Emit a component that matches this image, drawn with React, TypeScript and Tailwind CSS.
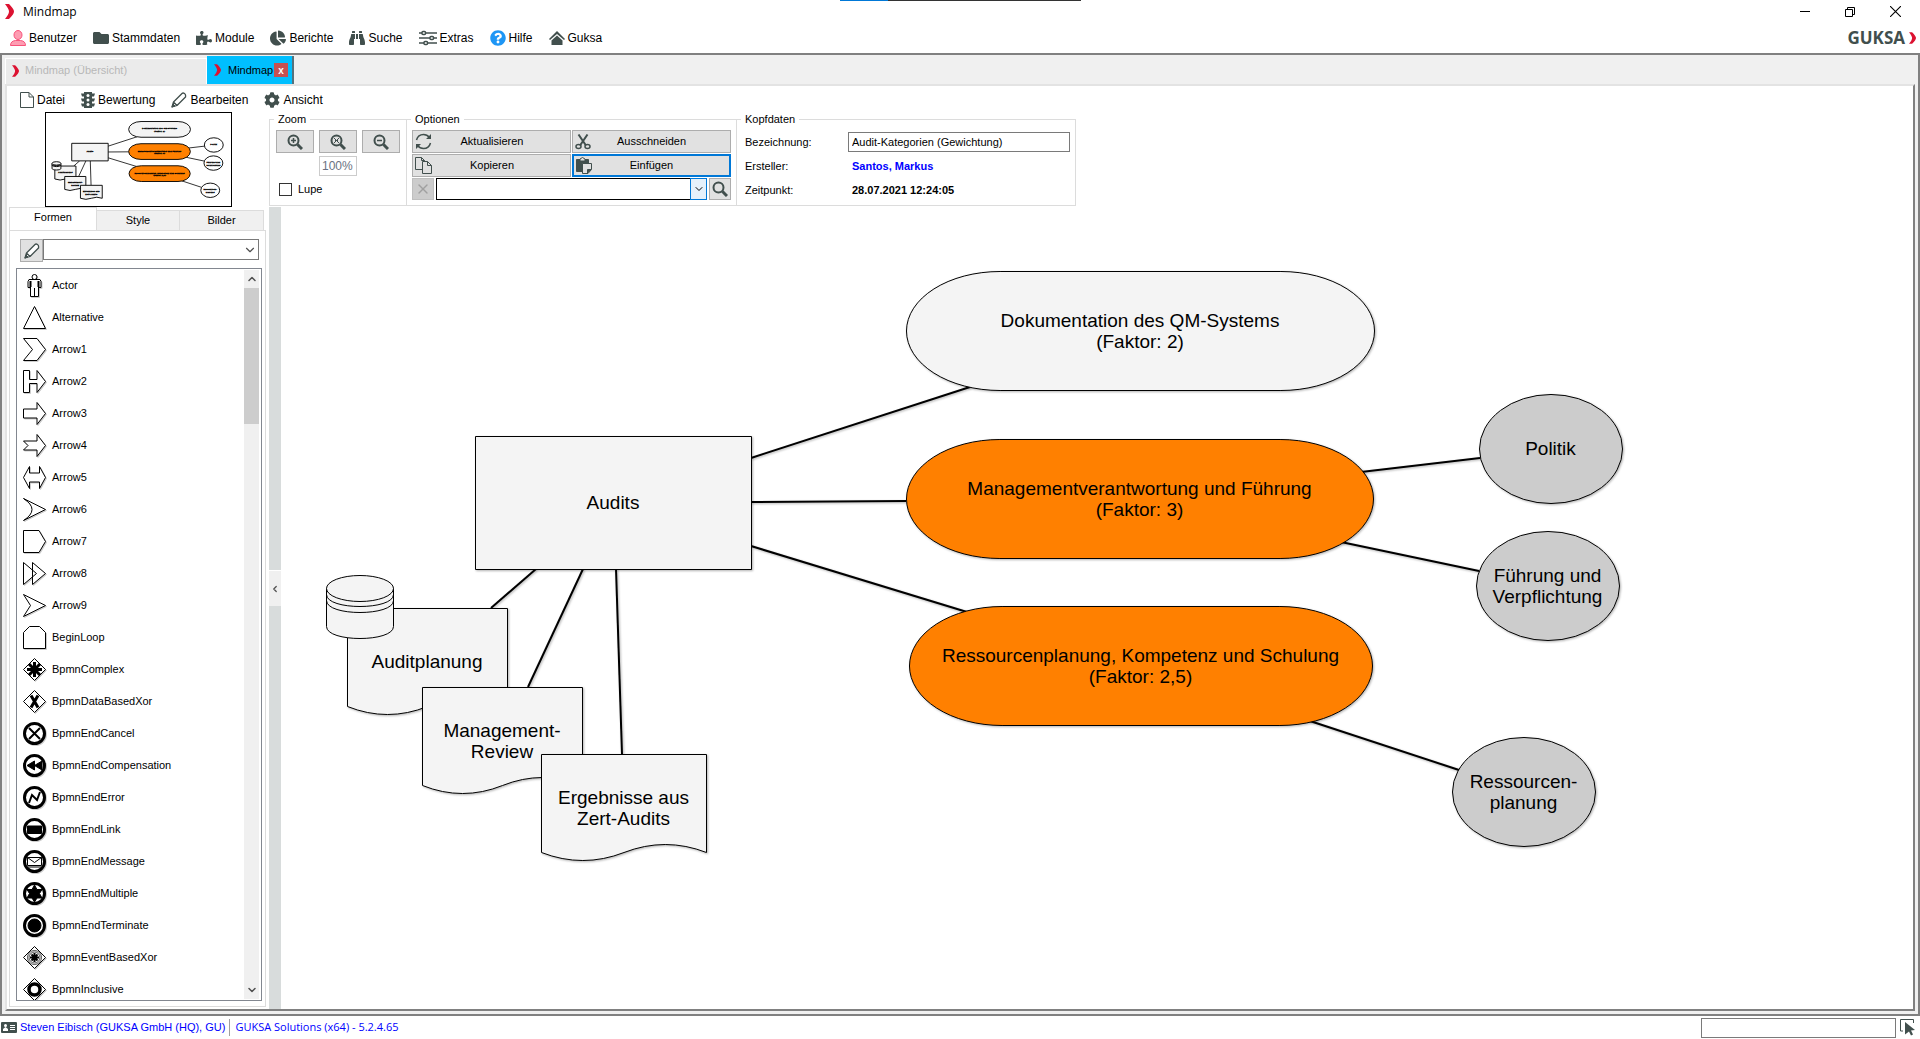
import type { ReactNode } from 'react';
import {
  FaBinoculars,
  FaChartPie,
  FaCog,
  FaFolder,
  FaPuzzlePiece,
  FaQuestionCircle,
} from 'react-icons/fa';
import { ChevronDown, ChevronUp, ChevronLeft, X } from 'lucide-react';

const DARK = '#414f4d';

function Chevron({ className = 'w-[9px] h-[15px]' }: { className?: string }) {
  return (
    <svg viewBox="0 0 9 15" className={className} aria-hidden="true">
      <path d="M0 0h4q5 5 5 7.500t-5 7.500h-4q4-5 4-7.500t-4-7.500z" fill="#dc1231" />
    </svg>
  );
}

function UserIcon() {
  return (
    <svg viewBox="0 0 16 16" className="w-4 h-4" fill="#fd9db2" stroke="#f8537b">
      <ellipse cx="8" cy="5" rx="4" ry="4.500" />
      <path d="M.5 15.500q0-4.500 5-5h5q5 .5 5 5z" />
    </svg>
  );
}

function HouseIcon() {
  return (
    <svg viewBox="0 0 16 16" className="w-4 h-4" fill={DARK}>
      <path d="M8 1L0 9l1 1 7-6 7 6 1-1z" />
      <path d="M8 5.500L2.500 10.500V15h11v-4.500z" />
    </svg>
  );
}

function SlidersIcon() {
  return (
    <svg viewBox="0 0 18 16" className="w-[18px] h-4" fill="#fff" stroke={DARK} strokeWidth="1.500">
      <path d="M0 3h18M0 8h18M0 13h18" />
      <rect x="3" y="1.500" width="3.500" height="3" rx="1" />
      <rect x="11" y="6.500" width="3.500" height="3" rx="1" />
      <rect x="5" y="11.500" width="3.500" height="3" rx="1" />
    </svg>
  );
}

function PageIcon() {
  return (
    <svg viewBox="0 0 14 16" className="w-[14px] h-4" fill="#fff" stroke={DARK}>
      <path d="M.5.500h8.500l4.500 4.500v10.500H.5zM9 .5V5h4.500" />
    </svg>
  );
}

function TrafficIcon() {
  return (
    <svg viewBox="0 0 14 16" className="w-[14px] h-4">
      <path d="M3 0h8v1.500h3l-1 3h-2v2h3l-1 3h-2v2h3l-1 3h-2V16H3v-1.500H1l-1-3h3v-2H1l-1-3h3v-2H1l-1-3h3z" fill={DARK} />
      <circle cx="7" cy="3.500" r="1.500" fill="#fff" />
      <circle cx="7" cy="8" r="1.500" fill="#fff" />
      <circle cx="7" cy="12.500" r="1.500" fill="#fff" />
    </svg>
  );
}

function PencilIcon() {
  return (
    <svg viewBox="0 0 16 16" className="w-4 h-4" fill="#fff" stroke={DARK} strokeLinejoin="round">
      <path d="M1 15l1.500-5L11 1.500Q12 .5 13.500 1.500T14.500 5L6 13.500zM2.500 10l3.500 3.500" strokeWidth="1.300" />
      <path d="M1 15l1-3 2 2z" fill={DARK} />
    </svg>
  );
}

function Magnifier({ kind }: { kind: 'plus' | 'minus' | 'cross' | 'plain' }) {
  return (
    <svg viewBox="0 0 16 16" className="w-4 h-4" fill="none" stroke={DARK}>
      <circle cx="6.500" cy="6.500" r="5" strokeWidth="2" />
      <path d="M10.500 10.500l4.500 4.500" strokeWidth="3" />
      {kind === 'plus' && <path d="M4 6.500h5M6.500 4v5" strokeWidth="1.500" />}
      {kind === 'minus' && <path d="M4 6.500h5" strokeWidth="1.500" />}
      {kind === 'cross' && <path d="M4 4l5 5M9 4l-5 5M5 6.500h3" />}
    </svg>
  );
}

function RefreshIcon() {
  return (
    <svg viewBox="0 0 17 17" className="w-[17px] h-[17px]" fill="none" stroke={DARK} strokeWidth="1.500">
      <path d="M1.500 7Q3 1.500 8.500 1.500q3.500 0 6 3M15.500 10Q14 15.500 8.500 15.500q-3.500 0-6-3" />
      <path d="M16 1v5h-5zM1 16v-5h5z" fill={DARK} stroke="none" />
    </svg>
  );
}

function ScissorsIcon() {
  return (
    <svg viewBox="0 0 16 16" className="w-4 h-4" fill="none" stroke={DARK} strokeWidth="1.500">
      <path d="M3.500.500l7.500 11M12.500.500L5 11.500" strokeWidth="2" />
      <ellipse cx="3.500" cy="12.500" rx="2.500" ry="2" />
      <ellipse cx="12.500" cy="12.500" rx="2.500" ry="2" />
    </svg>
  );
}

function CopyIcon() {
  return (
    <svg viewBox="0 0 17 17" className="w-[17px] h-[17px]" fill="#e1e1e1" stroke={DARK}>
      <path d="M.5.500h6l3 3v9h-9zM6.500.500v3h3" />
      <path d="M7.500 4.500h5l4 4v8h-9zM12.500 4.500v4h4" />
    </svg>
  );
}

function PasteIcon() {
  return (
    <svg viewBox="0 0 16 17" className="w-4 h-[17px]" stroke={DARK}>
      <path d="M.5 2.500h12v12H.5z" fill={DARK} />
      <path d="M4 4V2Q6.500-1 9 2v2z" fill="#e1e1e1" />
      <path d="M6.500 6.500h9v6l-3.500 4H6.500z" fill="#e1e1e1" />
      <path d="M15 12.500h-3.500V16z" fill={DARK} />
    </svg>
  );
}

const MAIN_MENU: { label: string; icon: ReactNode }[] = [
  { label: 'Benutzer', icon: <UserIcon /> },
  { label: 'Stammdaten', icon: <FaFolder className="w-4 h-4 text-[#414f4d]" /> },
  { label: 'Module', icon: <FaPuzzlePiece className="w-4 h-4 text-[#414f4d]" /> },
  { label: 'Berichte', icon: <FaChartPie className="w-4 h-4 text-[#414f4d]" /> },
  { label: 'Suche', icon: <FaBinoculars className="w-4 h-4 text-[#414f4d]" /> },
  { label: 'Extras', icon: <SlidersIcon /> },
  { label: 'Hilfe', icon: <FaQuestionCircle className="w-4 h-4 text-[#1e96f5]" /> },
  { label: 'Guksa', icon: <HouseIcon /> },
];

const MAP_MENU: { label: string; icon: ReactNode }[] = [
  { label: 'Datei', icon: <PageIcon /> },
  { label: 'Bewertung', icon: <TrafficIcon /> },
  { label: 'Bearbeiten', icon: <PencilIcon /> },
  { label: 'Ansicht', icon: <FaCog className="w-4 h-4 text-[#414f4d]" /> },
];

const diamond = <path d="M11.500.500l11 11-11 11-11-11z" />;
const ring = <circle cx="11.500" cy="11.500" r="10" strokeWidth="3" />;
const star = 'M11.500 4v15M4 11.500h15M6 6l11 11M17 6L6 17';

const SHAPES: { name: string; drawing: ReactNode }[] = [
  {
    name: 'Actor',
    drawing: (
      <>
        <circle cx="11.500" cy="3" r="2.500" />
        <path d="M6 5.500h11l1 2v6h-2.500V9v13.500h-8V9v4.500H5v-6zM11.500 14v8" />
        <path d="M7.500 7v6M15.500 7v6" strokeWidth="2" />
      </>
    ),
  },
  { name: 'Alternative', drawing: <path d="M11.500.500l11 22H.5z" /> },
  { name: 'Arrow1', drawing: <path d="M.5.500H14l8.500 11-8.500 11H.5l9-11z" /> },
  { name: 'Arrow2', drawing: <path d="M.5.500h6v9H14v-9l8.500 11-8.500 11v-9H6.500v9h-6z" /> },
  { name: 'Arrow3', drawing: <path d="M.5 7H14V.5l8.500 11-8.500 11V16H.5z" /> },
  { name: 'Arrow4', drawing: <path d="M.5 7H14V.5l8.500 11-8.500 11V16H.5L5 11.500z" /> },
  { name: 'Arrow5', drawing: <path d="M.5 11.500L6.500.500V7h10V.5l6 11-6 11V16h-10v6.500z" /> },
  { name: 'Arrow6', drawing: <path d="M.5.500l22 11-22 11q17-11 0-22z" /> },
  { name: 'Arrow7', drawing: <path d="M.5.500H16l6.500 11-6.500 11H.5z" /> },
  { name: 'Arrow8', drawing: <path d="M.5.500l13 11-13 11zM9.500.500l13 11-13 11z" /> },
  { name: 'Arrow9', drawing: <path d="M.5.500l22 11-22 11 7-11z" /> },
  { name: 'BeginLoop', drawing: <path d="M.5 22.500v-16l6-6h10l6 6v16z" /> },
  { name: 'BpmnComplex', drawing: <>{diamond}<path d={star} strokeWidth="3" /></> },
  {
    name: 'BpmnDataBasedXor',
    drawing: (
      <>
        {diamond}
        <path d="M8 5.500l7 12M15 5.500l-7 12" strokeWidth="3" />
      </>
    ),
  },
  { name: 'BpmnEndCancel', drawing: <>{ring}<path d="M6 6l11 11M17 6L6 17" strokeWidth="2" /></> },
  { name: 'BpmnEndCompensation', drawing: <>{ring}<path d="M11.500 7v9L4 11.500zM19 7v9l-7.500-4.500z" fill="#000" /></> },
  { name: 'BpmnEndError', drawing: <>{ring}<path d="M6 17l3-8 5 5 3-8" strokeWidth="2" /></> },
  { name: 'BpmnEndLink', drawing: <>{ring}<path d="M4.500 8h14v7.500h-14z" fill="#000" /></> },
  {
    name: 'BpmnEndMessage',
    drawing: (
      <>
        {ring}
        <path d="M4.500 7.500h14v8h-14zM4.500 7.500l7 5 7-5M5 17h13" />
      </>
    ),
  },
  { name: 'BpmnEndMultiple', drawing: <>{ring}<path d="M11.500 3l2.500 4.500h5l-2.500 4 2.500 4.500h-5l-2.500 4-2.500-4H4l2.500-4.500-2.500-4h5z" fill="#000" /></> },
  { name: 'BpmnEndTerminate', drawing: <>{ring}<circle cx="11.500" cy="11.500" r="6.500" fill="#000" /></> },
  {
    name: 'BpmnEventBasedXor',
    drawing: (
      <>
        {diamond}
        <circle cx="11.500" cy="11.500" r="7" strokeWidth=".7" />
        <circle cx="11.500" cy="11.500" r="5.500" strokeWidth=".7" />
        <path d="M11.500 7v9M7 11.500h9M8.500 8.500l6 6M14.500 8.500l-6 6" strokeWidth="2" />
      </>
    ),
  },
  { name: 'BpmnInclusive', drawing: <>{diamond}<circle cx="11.500" cy="11.500" r="5.500" strokeWidth="3.500" /></> },
];

type Kind = 'box' | 'pill' | 'oval' | 'doc';

interface MapNode {
  kind: Kind;
  x: number;
  y: number;
  w: number;
  h: number;
  fill: string;
  lines: string[];
}

// canvas coordinates, origin is the top left of the drawing area
const NODES: MapNode[] = [
  { kind: 'box', x: 194, y: 229, w: 276, h: 133, fill: '#f4f4f4', lines: ['Audits'] },
  { kind: 'doc', x: 66, y: 401, w: 160, h: 107, fill: '#f4f4f4', lines: ['Auditplanung'] },
  { kind: 'doc', x: 141, y: 480, w: 160, h: 107, fill: '#f4f4f4', lines: ['Management-', 'Review'] },
  { kind: 'doc', x: 260, y: 547, w: 165, h: 107, fill: '#f4f4f4', lines: ['Ergebnisse aus', 'Zert-Audits'] },
  { kind: 'pill', x: 625, y: 64, w: 468, h: 119, fill: '#f4f4f4', lines: ['Dokumentation des QM-Systems', '(Faktor: 2)'] },
  { kind: 'pill', x: 625, y: 232, w: 467, h: 119, fill: '#ff8000', lines: ['Managementverantwortung und Führung', '(Faktor: 3)'] },
  { kind: 'pill', x: 628, y: 399, w: 463, h: 119, fill: '#ff8000', lines: ['Ressourcenplanung, Kompetenz und Schulung', '(Faktor: 2,5)'] },
  { kind: 'oval', x: 1198, y: 187, w: 143, h: 109, fill: '#cccccc', lines: ['Politik'] },
  { kind: 'oval', x: 1195, y: 324, w: 143, h: 109, fill: '#cccccc', lines: ['Führung und', 'Verpflichtung'] },
  { kind: 'oval', x: 1171, y: 530, w: 143, h: 109, fill: '#cccccc', lines: ['Ressourcen-', 'planung'] },
];

const EDGES = [
  'M470 251L689 180',
  'M470 295L625 294',
  'M470 339L686 405',
  'M255 362L210 401',
  'M302 362L247 480',
  'M335 362L341 547',
  'M1080 265L1199 251',
  'M1060 335L1198 364',
  'M1029 514L1178 563',
];

function outline({ kind, x, y, w, h }: MapNode) {
  const r = x + w;
  const b = y + h;
  if (kind === 'pill') {
    const q = w / 5;
    return `M${x + q} ${y}H${r - q}A${q} ${h / 2} 0 0 1 ${r - q} ${b}H${x + q}A${q} ${h / 2} 0 0 1 ${x + q} ${y}z`;
  }
  if (kind === 'oval') {
    return `M${x} ${y + h / 2}A${w / 2} ${h / 2} 0 0 1 ${r} ${y + h / 2}A${w / 2} ${h / 2} 0 0 1 ${x} ${y + h / 2}z`;
  }
  if (kind === 'doc') {
    const e = b - 9;
    return `M${x} ${y}H${r}V${e}Q${r - w / 4} ${e - 16} ${x + w / 2} ${e}T${x} ${e}z`;
  }
  return `M${x} ${y}H${r}V${b}H${x}z`;
}

function Drawing({ preview = false }: { preview?: boolean }) {
  const shadow = preview ? undefined : 'drop-shadow-[1px_1px_1px_rgba(0,0,0,0.3)]';
  return (
    <g stroke="#000" strokeWidth={preview ? 7 : 1}>
      {EDGES.map((d) => (
        <path key={d} d={d} strokeWidth={preview ? 6 : 2} className={shadow} />
      ))}
      {NODES.map((node) => (
        <path
          key={node.lines[0]}
          d={outline(node)}
          transform="translate(.5 .5)"
          fill={preview && node.kind === 'oval' ? '#fff' : node.fill}
          className={shadow}
        />
      ))}
      <g fill="#f4f4f4" transform="translate(.5 .5)">
        <path d="M45 381v38c0 16 67 16 67 0v-38z" />
        <path d="M45 393c0 16 67 16 67 0M45 387c0 16 67 16 67 0" fill="none" />
        <ellipse cx="78.500" cy="381" rx="33.500" ry="13" />
      </g>
    </g>
  );
}

function Preview() {
  return (
    <div className="mx-auto w-[187px] h-[95px] border border-black bg-white">
      <svg viewBox="0 0 1400 704" className="w-full h-full">
        <Drawing preview />
        {NODES.map((node) => (
          <text
            key={node.lines[0]}
            y={node.y + node.h / 2}
            textAnchor="middle"
            fontSize="17"
            fontWeight="bold"
            stroke="#000"
            strokeWidth="2"
          >
            {node.lines.map((line, i) => (
              <tspan key={line} x={node.x + node.w / 2} dy={i * 22}>
                {line}
              </tspan>
            ))}
          </text>
        ))}
      </svg>
    </div>
  );
}

function Canvas() {
  return (
    <main className="relative flex-1 min-w-0 overflow-hidden bg-white">
      <svg className="absolute inset-0 w-full h-full">
        <Drawing />
      </svg>
      {NODES.map((node) => (
        <div
          key={node.lines[0]}
          className="absolute flex flex-col items-center justify-center whitespace-nowrap text-[19px] leading-[21px]"
          style={{ left: node.x, top: node.y, width: node.w, height: node.h }}
        >
          {node.lines.map((line) => (
            <span key={line}>{line}</span>
          ))}
        </div>
      ))}
    </main>
  );
}

function Group({ title, className, children }: { title: string; className: string; children: ReactNode }) {
  return (
    <fieldset className={`h-[94px] border border-[#dcdcdc] ${className}`}>
      <legend className="ml-1 px-1 text-[11px] leading-[14px]">{title}</legend>
      {children}
    </fieldset>
  );
}

function ToolButton({ label, icon, focused = false }: { label: string; icon: ReactNode; focused?: boolean }) {
  return (
    <button
      className={`flex items-center h-[23px] pl-[2px] pr-[18px] bg-[#e1e1e1] ${
        focused ? 'border-2 border-[#0078d7]' : 'border border-[#adadad]'
      }`}
    >
      {icon}
      <span className="flex-1 text-center">{label}</span>
    </button>
  );
}

function ZoomGroup() {
  return (
    <Group title="Zoom" className="w-[138px]">
      <div className="grid grid-cols-3 gap-x-[5px] gap-y-[3px] px-[6px] pt-[4px]">
        {(['plus', 'cross', 'minus'] as const).map((kind) => (
          <button
            key={kind}
            aria-label={`Zoom ${kind}`}
            className="flex items-center justify-center h-[23px] border border-[#adadad] bg-[#e1e1e1]"
          >
            <Magnifier kind={kind} />
          </button>
        ))}
        <input
          aria-label="Zoomstufe"
          defaultValue="100%"
          className="col-start-2 w-full h-5 px-[2px] border border-[#cccccc] text-[12px] text-gray-500"
        />
      </div>
      <label className="flex items-center gap-[6px] px-[9px] pt-[6px] leading-[14px]">
        <input type="checkbox" className="appearance-none w-[13px] h-[13px] border border-[#333]" />
        Lupe
      </label>
    </Group>
  );
}

function OptionsGroup() {
  return (
    <Group title="Optionen" className="w-[331px] -ml-px">
      <div className="px-[5px] pt-[4px]">
        <div className="grid grid-cols-2 gap-px">
          <ToolButton label="Aktualisieren" icon={<RefreshIcon />} />
          <ToolButton label="Ausschneiden" icon={<ScissorsIcon />} />
          <ToolButton label="Kopieren" icon={<CopyIcon />} />
          <ToolButton label="Einfügen" icon={<PasteIcon />} focused />
        </div>
        <div className="flex gap-[2px] mt-px">
          <button
            aria-label="Leeren"
            className="flex items-center justify-center w-[22px] h-[22px] border border-[#bfbfbf] bg-[#cccccc]"
          >
            <X size={16} color="#a0a0a0" />
          </button>
          <div className="relative flex-1 h-[22px]">
            <select aria-label="Suchbegriff" className="appearance-none w-full h-full border border-black bg-white" />
            <span className="absolute inset-y-0 right-0 w-[17px] flex items-center justify-center border border-[#0078d7] bg-[#e5f1fb] pointer-events-none">
              <ChevronDown size={12} strokeWidth={2} />
            </span>
          </div>
          <button
            aria-label="Suchen"
            className="flex items-center justify-center w-[22px] h-[22px] border border-[#adadad] bg-[#e1e1e1]"
          >
            <Magnifier kind="plain" />
          </button>
        </div>
      </div>
    </Group>
  );
}

function HeaderGroup() {
  return (
    <Group title="Kopfdaten" className="w-[340px] -ml-px">
      <div className="grid grid-cols-[103px_1fr] items-center pr-[5px] pt-[4px] pl-[8px]">
        <label htmlFor="bezeichnung" className="leading-6">
          Bezeichnung:
        </label>
        <input
          id="bezeichnung"
          defaultValue="Audit-Kategorien (Gewichtung)"
          className="w-full h-5 px-[3px] border border-[#7a7a7a]"
        />
        <span className="leading-6">Ersteller:</span>
        <a href="#ersteller" className="pl-1 font-bold leading-6 text-[#0000ff]">
          Santos, Markus
        </a>
        <span className="leading-6">Zeitpunkt:</span>
        <span className="pl-1 font-bold leading-6">28.07.2021 12:24:05</span>
      </div>
    </Group>
  );
}

function ShapeList() {
  return (
    <div className="flex flex-1 min-h-0 mt-[6px] ml-[6px] mr-[3px] mb-[5px] border border-[#828790] bg-white">
      <ul className="flex-1 overflow-hidden">
        {SHAPES.map(({ name, drawing }) => (
          <li key={name} className="flex items-center gap-[5px] h-8 pl-[6px] pt-[2px]">
            <svg
              viewBox="0 0 24 24"
              className="shrink-0 w-6 h-6 drop-shadow-[1px_1px_0_rgba(0,0,0,0.2)]"
              fill="#fff"
              stroke="#000"
            >
              {drawing}
            </svg>
            <span className="pb-[2px] text-[11px]">{name}</span>
          </li>
        ))}
      </ul>
      <div className="flex flex-col items-center w-[15px] my-px mr-[2px] bg-[#f0f0f0] text-[#505050]">
        <ChevronUp size={12} strokeWidth={3} className="my-[3px] shrink-0" />
        <div className="w-full h-[136px] bg-[#cdcdcd]" />
        <ChevronDown size={12} strokeWidth={3} className="mt-auto mb-[3px]" />
      </div>
    </div>
  );
}

function Sidebar() {
  return (
    <aside className="flex flex-col w-[261px] shrink-0 pl-[2px] pr-[2px] pb-[2px]">
      <div className="pl-[2px]">
        <Preview />
      </div>
      <div className="flex items-end h-[23px]" role="tablist">
        <button role="tab" aria-selected="true" className="w-[88px] h-[23px] pb-1 border border-b-0 border-[#dcdcdc] bg-white">
          Formen
        </button>
        <button role="tab" className="w-[83px] h-[20px] border border-l-0 border-b-0 border-[#dcdcdc] bg-[#f0f0f0]">
          Style
        </button>
        <button role="tab" className="w-[84px] h-[20px] border border-l-0 border-b-0 border-[#dcdcdc] bg-[#f0f0f0]">
          Bilder
        </button>
      </div>
      <div className="flex flex-col flex-1 min-h-0 border border-[#dcdcdc]">
        <div className="flex mt-[8px] ml-[10px] mr-[6px]">
          <button
            aria-label="Filter bearbeiten"
            className="flex items-center justify-center w-[23px] h-[23px] border border-[#adadad] bg-[#e1e1e1]"
          >
            <PencilIcon />
          </button>
          <div className="relative flex-1 h-[21px]">
            <select aria-label="Formenfilter" className="appearance-none w-full h-full border border-[#7a7a7a] bg-white" />
            <ChevronDown size={14} strokeWidth={2} color="#505050" className="absolute right-[2px] top-1 pointer-events-none" />
          </div>
        </div>
        <ShapeList />
      </div>
    </aside>
  );
}

function TitleBar() {
  return (
    <header className="relative flex items-center h-[23px] pl-[5px] text-[12px] font-['Open_Sans',sans-serif]">
      <Chevron />
      <h1 className="ml-[9px]">Mindmap</h1>
      <div className="absolute top-0 left-[840px] flex w-[241px] h-px bg-[#333]">
        <span className="w-12 bg-[#0078d7]" />
      </div>
      <div className="flex items-center gap-[35px] ml-auto pr-[19px]">
        <button aria-label="Minimieren" className="w-[10px] h-px bg-black" />
        <button aria-label="Verkleinern">
          <svg viewBox="0 0 10 10" className="w-[10px] h-[10px]" fill="none" stroke="#000">
            <path d="M.5 2.500h7v7h-7zM2.500 2V.5h7v7H8" />
          </svg>
        </button>
        <button aria-label="Schließen">
          <svg viewBox="0 0 10 10" className="w-[11px] h-[11px]" stroke="#000">
            <path d="M0 0l10 10M10 0L0 10" />
          </svg>
        </button>
      </div>
    </header>
  );
}

export default function App() {
  return (
    <div className="flex flex-col h-screen bg-white text-black text-[11px] font-['Liberation_Sans',Arial,sans-serif]">
      <TitleBar />
      <nav className="flex items-center h-[30px] pl-[10px] pr-1 text-[12px]">
        <div className="flex gap-[16px]">
          {MAIN_MENU.map(({ label, icon }) => (
            <button key={label} className="flex items-center gap-[3px]">
              {icon}
              {label}
            </button>
          ))}
        </div>
        <div className="flex items-center gap-1 ml-auto font-bold text-[17px] leading-5 text-[#414f4d] font-['Open_Sans',sans-serif]">
          GUKSA
          <Chevron className="w-[7px] h-[12px]" />
        </div>
      </nav>

      <div className="flex flex-col flex-1 min-h-0 border-2 border-[#808080] bg-[#f0f0f0]">
        <div className="flex items-end h-[29px] pl-[3px]" role="tablist">
          <button
            role="tab"
            className="flex items-center gap-[6px] w-[202px] h-[26px] pl-[6px] pb-[2px] border border-b-0 border-white bg-[#ebebeb] text-[#b8b8b8]"
          >
            <Chevron className="w-[7px] h-[12px]" />
            Mindmap (Übersicht)
          </button>
          <div className="flex items-center h-[28px] w-[87px] pl-[7px] border-r-2 border-[#55727c] bg-[#00bfff]">
            <button role="tab" aria-selected="true" className="flex items-center gap-[7px]">
              <Chevron className="w-[7px] h-[12px]" />
              Mindmap
            </button>
            <button
              aria-label="Tab schließen"
              className="flex items-center justify-center w-[14px] h-[14px] ml-auto mr-1 bg-[#c75050] font-bold text-[10px] text-white"
            >
              x
            </button>
          </div>
        </div>

        <div className="flex flex-col flex-1 min-h-0 ml-[3px] mr-[3px] mb-[3px] border-2 border-t-[#e3e3e3] border-l-[#e3e3e3] border-r-[#808080] border-b-[#808080] bg-white">
          <nav className="flex items-center gap-[16px] h-[26px] pl-[13px] pt-px text-[12px]">
            {MAP_MENU.map(({ label, icon }) => (
              <button key={label} className="flex items-center gap-[3px]">
                {icon}
                {label}
              </button>
            ))}
          </nav>
          <div className="flex flex-1 min-h-0">
            <Sidebar />
            <div className="flex flex-col flex-1 min-w-0">
              <div className="flex h-[95px] pl-[1px]">
                <ZoomGroup />
                <OptionsGroup />
                <HeaderGroup />
              </div>
              <div className="flex flex-1 min-h-0">
                <div className="flex flex-col justify-center w-3 ml-px bg-[#d8dcdc]">
                  <button
                    aria-label="Seitenleiste einklappen"
                    className="flex items-center justify-center h-9 mb-10 border-t border-white bg-[#f0f0f0]"
                  >
                    <ChevronLeft size={10} strokeWidth={3} color="#505050" />
                  </button>
                </div>
                <Canvas />
              </div>
            </div>
          </div>
        </div>
      </div>

      <footer className="flex items-center h-[23px] pl-px pr-[5px] text-[11px] text-[#0000ff]">
        <svg viewBox="0 0 16 11" className="w-4 h-[11px]">
          <rect width="16" height="11" rx="1" fill={DARK} />
          <circle cx="4.500" cy="3.500" r="1.500" fill="#fff" />
          <path d="M2 9V7l2.500-2L7 7v2zM9 3h5v1H9zM9 5h5v1H9zM9 7h5v1H9z" fill="#fff" />
        </svg>
        <span className="pl-[3px] pr-1 border-r border-[#a0a0a0]">Steven Eibisch (GUKSA GmbH (HQ), GU)</span>
        <span className="pl-[5px] font-['Open_Sans',sans-serif]">GUKSA Solutions (x64) - 5.2.4.65</span>
        <input aria-label="Status" className="w-[195px] h-5 ml-auto mr-1 border border-[#7a7a7a]" />
        <svg viewBox="0 0 15 17" className="w-[15px] h-[17px]" fill={DARK}>
          <path d="M3 12H.5V.5h13V4" fill="none" stroke={DARK} />
          <path d="M5 3l10 8-4 .5 2 4-2 1-2-4-4 3z" />
        </svg>
      </footer>
    </div>
  );
}
